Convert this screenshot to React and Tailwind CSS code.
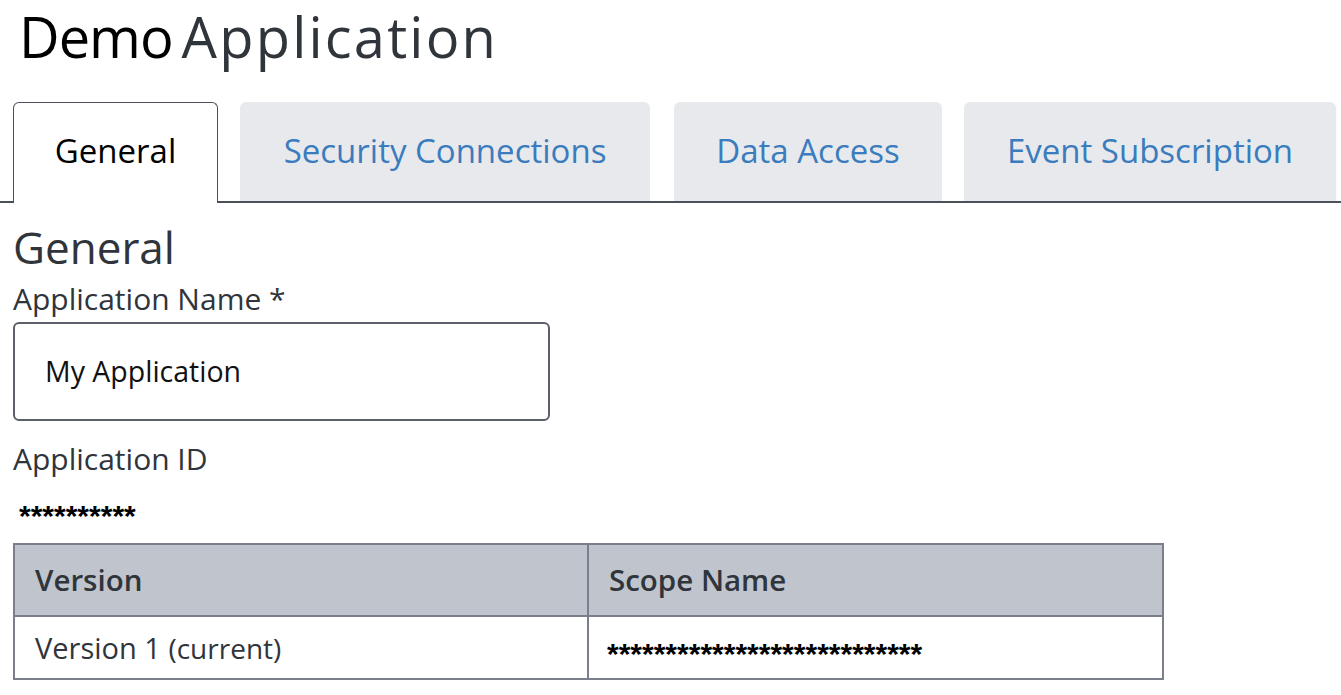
import React from 'react';

const TABS = ['General', 'Security Connections', 'Data Access', 'Event Subscription'];

export default function App() {
  return (
    <div className="min-h-screen bg-white font-['Open_Sans',sans-serif] text-[#30343b]">
      <h1 className="pl-[19px] pt-[1px] text-[56px] leading-[70px]">
        <span className="tracking-[-1px] text-black">Demo</span>
        <span className="ml-[9px] tracking-[2.2px]">Application</span>
      </h1>

      {/* Tabs */}
      <div className="mt-[31px] flex items-end border-b-2 border-[#4b505a] pl-[13px]">
        <div className="-mb-[2px] flex h-[101px] w-[205px] items-center justify-center rounded-t-[6px] border border-b-0 border-[#4b505a] bg-white pb-[4px] text-[33px] text-black">
          General
        </div>
        {TABS.slice(1).map((t, i) => (
          <div
            key={t}
            className={`flex h-[99px] items-center justify-center rounded-t-[6px] bg-[#e8e9ec] pb-[2px] text-[33px] text-[#3a7cbd] ${
              i === 0 ? 'ml-[22px] w-[410px]' : i === 1 ? 'ml-[24px] w-[268px]' : 'ml-[22px] w-[372px]'
            }`}
          >
            {t}
          </div>
        ))}
      </div>

      <div className="pl-[13px]">
        <h2 className="mt-[18px] text-[44px] leading-[52px]">General</h2>
        <label className="mt-[8px] block text-[30px] leading-[36px]">Application Name *</label>
        <div className="mt-[5px] flex h-[99px] w-[537px] items-center rounded-[6px] border-2 border-[#5b606a] pl-[30px] text-[28.5px] text-[#111]">
          My Application
        </div>
        <div className="mt-[20px] text-[30px] leading-[36px]">Application ID</div>
        <div className="mt-[27px] pl-[6px] font-['Liberation_Sans',sans-serif] text-[30px] font-bold leading-[24px] text-black">
          **********
        </div>

        <table className="mt-[15px] w-[1151px] border-collapse text-[29.5px]">
          <thead>
            <tr className="bg-[#c0c4cc]">
              <th className="h-[72px] w-[574px] border-2 border-[#7a7f89] pl-[20px] text-left font-semibold">Version</th>
              <th className="h-[72px] border-2 border-[#7a7f89] pl-[20px] text-left font-semibold">Scope Name</th>
            </tr>
          </thead>
          <tbody>
            <tr>
              <td className="h-[63px] border-2 border-[#7a7f89] pl-[20px] text-[29px]">
                Version 1 <span className="text-[28px]">(current)</span>
              </td>
              <td className="h-[63px] border-2 border-[#7a7f89] pl-[18px] pt-[12px] font-['Liberation_Sans',sans-serif] text-[30px] font-bold leading-[30px] text-black">
                ***************************
              </td>
            </tr>
          </tbody>
        </table>
      </div>
    </div>
  );
}
